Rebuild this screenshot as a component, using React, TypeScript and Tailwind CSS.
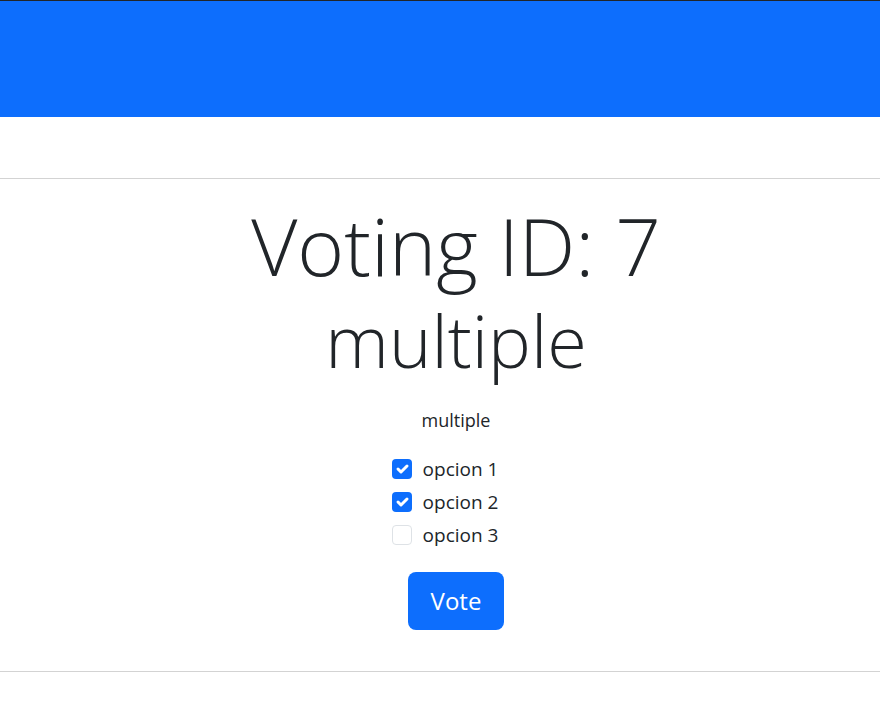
import { useState } from 'react';

const options = ['opcion 1', 'opcion 2', 'opcion 3'];

export default function App() {
    const [checked, setChecked] = useState<boolean[]>([true, true, false]);

    const toggle = (i: number) => {
        setChecked(prev => prev.map((c, j) => (j === i ? !c : c)));
    };

    return (
        <div className="min-h-[728px] bg-white text-[#212529] font-['Open_Sans',sans-serif]">
            {/* Header band */}
            <div className="h-[117px] bg-[#0d6efd] border-t border-[#212529]" />

            <div className="h-[61px]" />
            <hr className="border-0 border-t border-[#d3d3d3]" />

            {/* Voting */}
            <div className="flex flex-col items-center pl-[32px] pt-[18px]">
                <h1 className="text-[80px] font-light leading-[1.2]">Voting ID: 7</h1>
                <h2 className="text-[72px] font-light leading-[1.2] mt-[4px]">multiple</h2>
                <p className="text-[18px] mt-[24px]">multiple</p>

                <div className="flex flex-col gap-[3px] mt-[20px] mr-[22px]">
                    {options.map((opt, i) => (
                        <label key={opt} className="flex items-center gap-[11px] text-[19px] leading-[30px] cursor-pointer">
                            <span
                                onClick={() => toggle(i)}
                                className={
                                    checked[i]
                                        ? 'w-[20px] h-[20px] rounded-[4px] bg-[#0d6efd] flex items-center justify-center'
                                        : 'w-[20px] h-[20px] rounded-[4px] border border-[#dee2e6] bg-white'
                                }
                            >
                                {checked[i] && (
                                    <svg width="20" height="20" viewBox="0 0 20 20" fill="none">
                                        <path d="M6 10l3 3 6-6" stroke="#fff" strokeWidth="3" strokeLinecap="round" strokeLinejoin="round" />
                                    </svg>
                                )}
                            </span>
                            {opt}
                        </label>
                    ))}
                </div>

                <button className="mt-[22px] w-[96px] h-[58px] rounded-[8px] bg-[#0d6efd] text-white text-[24px]">
                    Vote
                </button>
            </div>

            <hr className="mt-[41px] border-0 border-t border-[#d3d3d3]" />
        </div>
    );
}
